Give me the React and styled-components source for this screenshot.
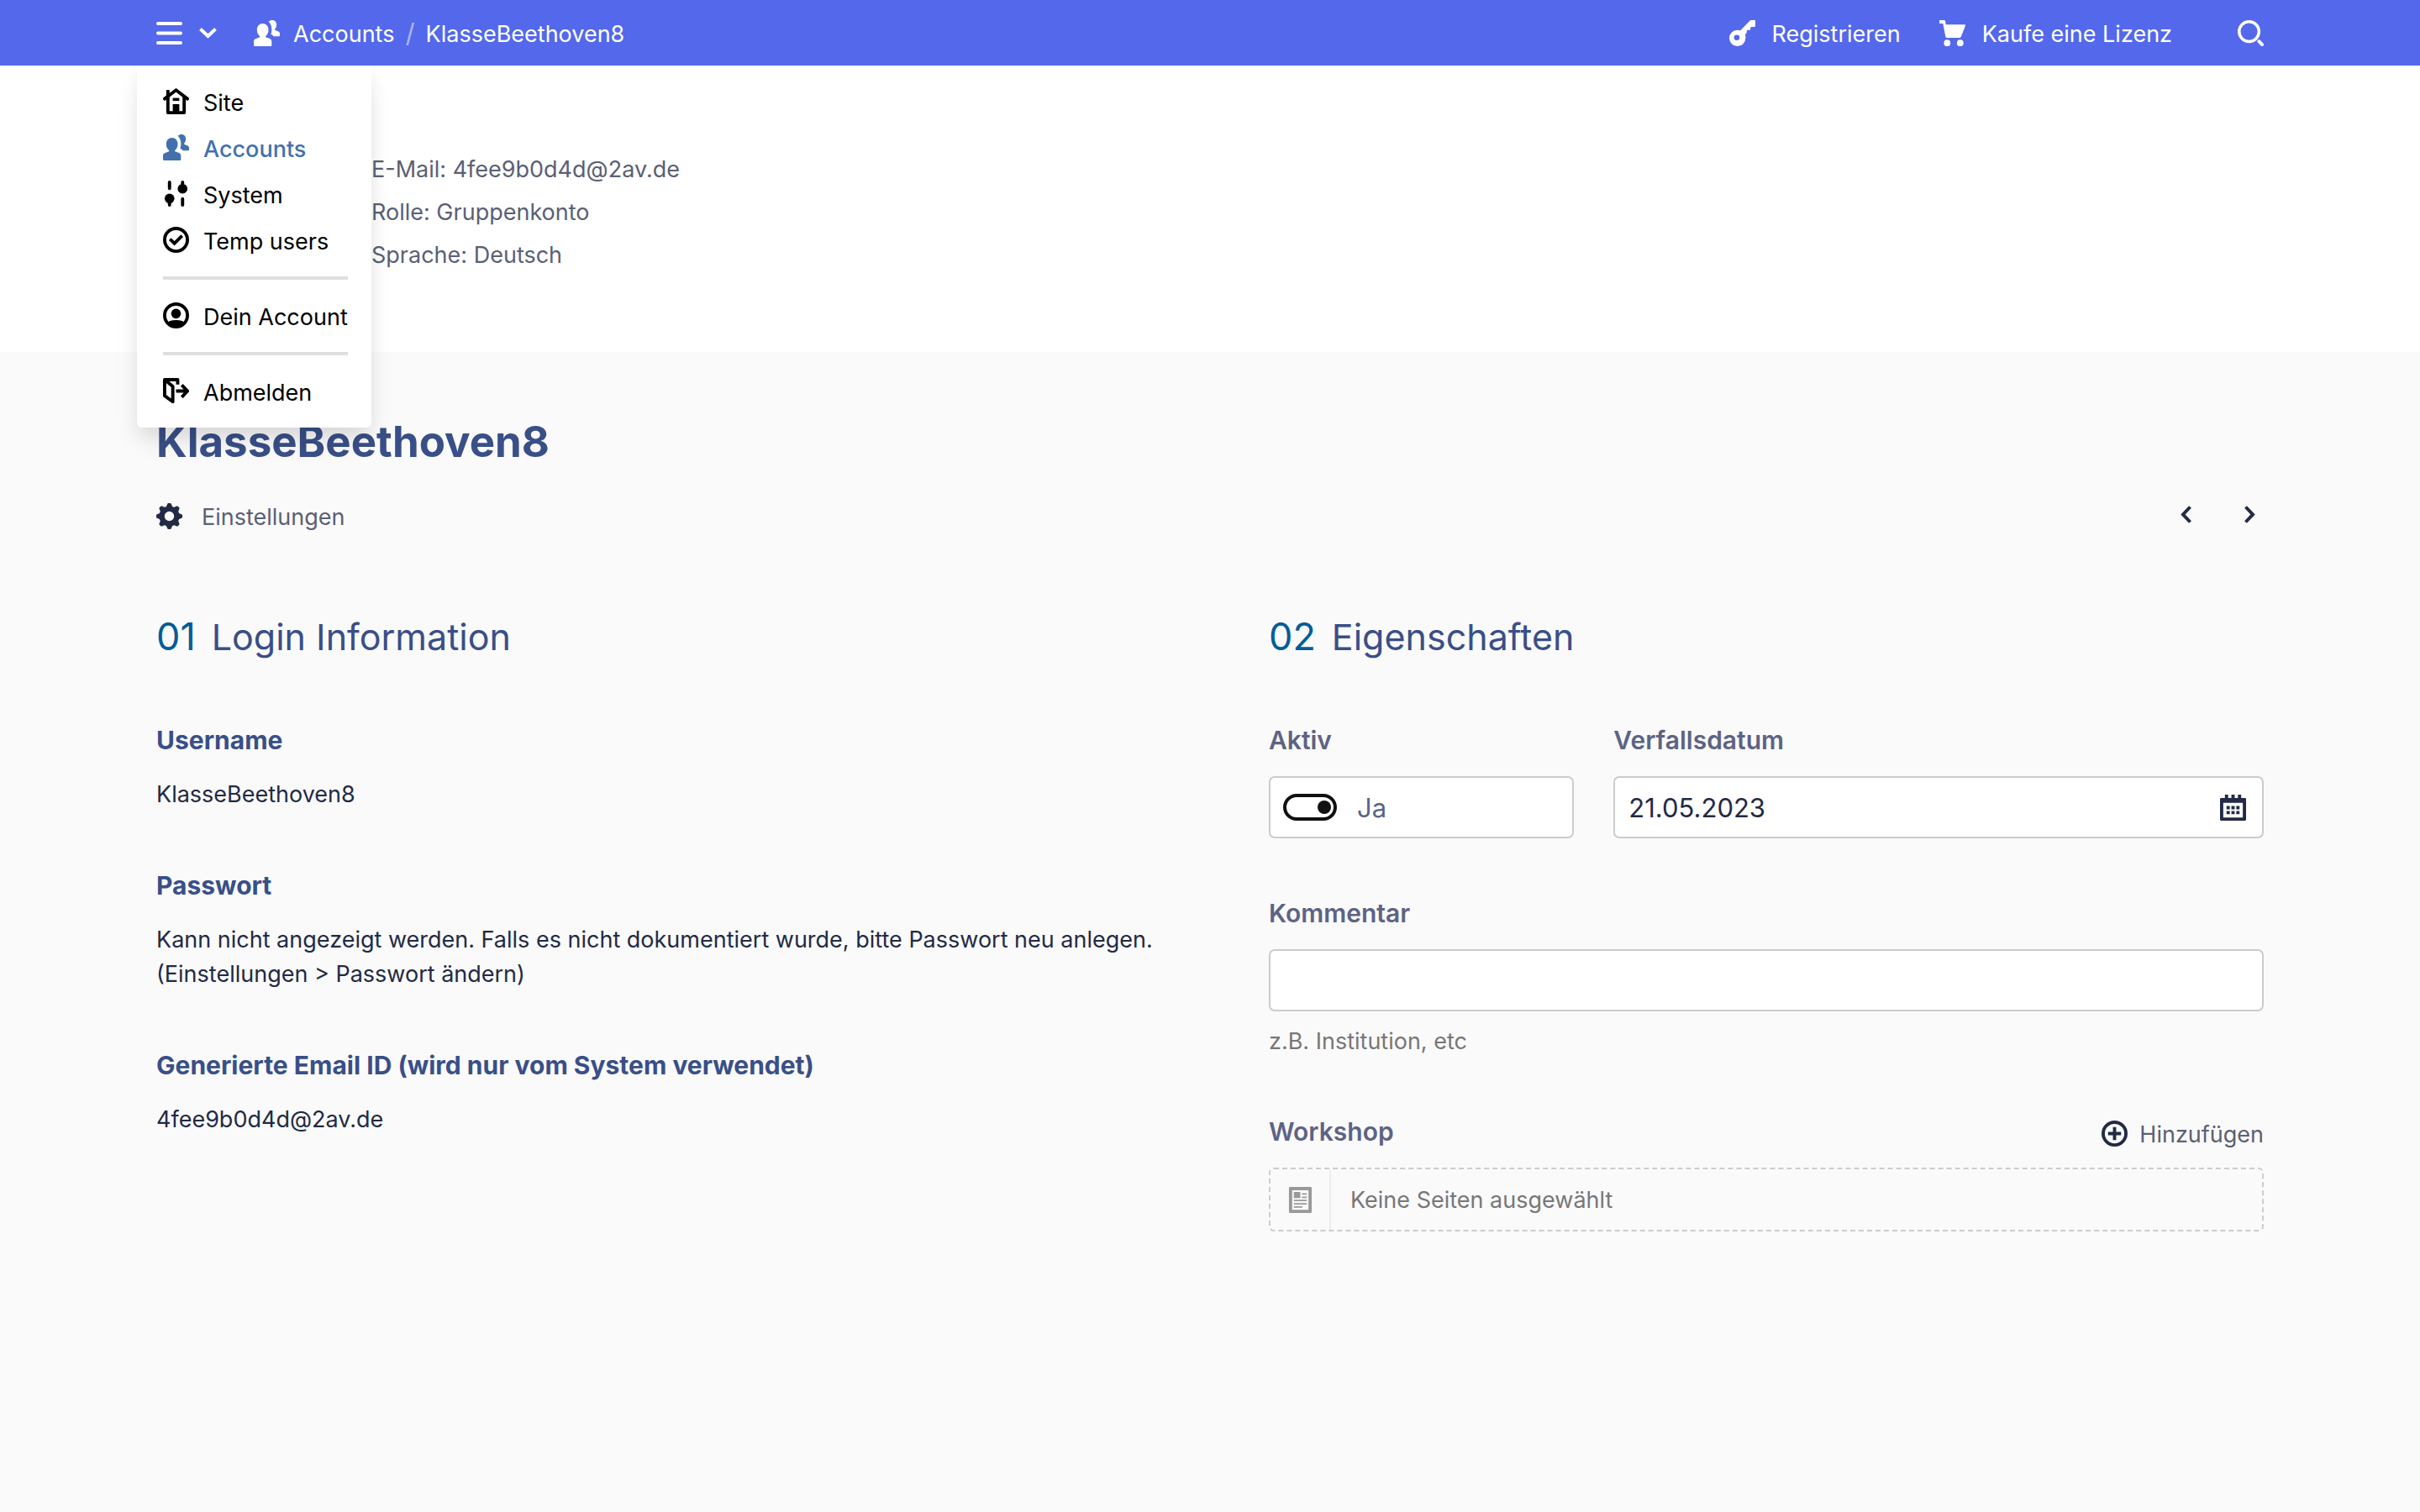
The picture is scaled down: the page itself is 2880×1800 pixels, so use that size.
import React from "react";
import styled, { createGlobalStyle } from "styled-components";

const color = {
  bar: "#5468eb",
  page: "#fafafa",
  heading: "#394f88",
  number: "#005d99",
  label: "#5d6385",
  muted: "#5a6075",
  ink: "#222a45",
  help: "#777777",
  border: "#cccccc",
  active: "#4271ae",
};

const GlobalStyle = createGlobalStyle`
  *, *::before, *::after { box-sizing: border-box; }
  body {
    margin: 0;
    background: ${color.page};
    color: ${color.ink};
    font-family: Inter, "Liberation Sans", sans-serif;
    font-size: 27px;
    line-height: 41px;
  }
  h1, h2, h3, p { margin: 0; padding: 0; }
  a { color: inherit; text-decoration: none; }
  button { border: 0; padding: 0; background: none; color: inherit; font: inherit; cursor: pointer; }
  input { font: inherit; margin: 0; }
`;

/* ---------- icons ---------- */

const Svg = styled.svg`
  display: block;
  flex: none;
  width: ${(p) => p.$w || 31}px;
  height: ${(p) => p.$h || 31}px;
  color: ${(p) => p.$color || "inherit"};
`;

function Glyph({ children, tint }) {
  return (
    <Svg viewBox="0 0 16 16" fill="currentColor" $color={tint} aria-hidden="true">
      {children}
    </Svg>
  );
}

const line = { fill: "none", stroke: "currentColor", strokeWidth: 2 };

const UsersIcon = (p) => (
  <Glyph {...p}>
    <path d="M5.5 2C7.5 2 9 3.600 9 5.500V6.300C9 7.700 8.300 9 7.300 9.800V10.400L9.900 11.400C10.600 11.800 11 12.400 11 13.200V15.500A.5.5 0 0 1 10.500 16H.5A.5.5 0 0 1 0 15.500V13.200C0 12.400 .4 11.800 1.100 11.500L3.700 10.400V9.800C2.700 9 2 7.700 2 6.300V5.500C2 3.600 3.500 2 5.500 2Z" />
    <path d="M11.500 0C13 0 14 1.200 14 2.700C14 4 13.700 4.700 13 5.400V6L15.200 7C15.800 7.300 16 7.800 16 8.400V9.500A.4.4 0 0 1 15.600 9.900H12.200C11.800 9.400 11.300 9 10.500 8.700C10.800 8 11 7 11 6V5.500C11 3.600 10.300 2 9.100 .9C9.700 .3 10.500 0 11.500 0Z" />
  </Glyph>
);
const HomeIcon = () => (
  <Glyph>
    <path {...line} strokeLinecap="round" d="M1 6.500 8 1.200 15 6.500" />
    <path {...line} strokeLinejoin="round" d="M3 5V15H13V5" />
    <rect x="2" y="1" width="2" height="4.500" rx=".4" />
    <rect x="6" y="9.800" width="4" height="6" />
    <rect x="6" y="6" width="4" height="1.800" />
  </Glyph>
);
const SlidersIcon = () => (
  <Glyph>
    <path {...line} strokeLinecap="round" d="M4 1V4.800M4 12V15M12 1V4M12 11.200V15" />
    <circle cx="4" cy="11" r="3" />
    <circle cx="12" cy="5" r="3" />
  </Glyph>
);
const CheckIcon = () => (
  <Glyph>
    <circle {...line} cx="8" cy="8" r="7" />
    <path {...line} d="M4.300 7.600 7 10.200 11.700 5.500" />
  </Glyph>
);
const AccountIcon = () => (
  <Glyph>
    <circle {...line} cx="8" cy="8" r="7" />
    <circle cx="8" cy="6.900" r="3" />
    <path d="M2.200 12.800C3.500 11.300 5.700 10.900 8 10.900S12.500 11.300 13.800 12.800C11 16.200 5 16.200 2.200 12.800Z" />
  </Glyph>
);
const LogoutIcon = () => (
  <Glyph>
    <path {...line} strokeLinejoin="round" d="M1 1H9V4" />
    <path {...line} strokeLinejoin="round" d="M1 1 6 5.200V14.600L1 10.900Z" />
    <path {...line} d="M8 8H14.500M11.500 4.300 15 8 11.500 11.800" />
  </Glyph>
);
const GearIcon = (p) => (
  <Glyph {...p}>
    <circle fill="none" stroke="currentColor" strokeWidth="3.300" cx="8" cy="8" r="4.600" />
    {[0, 45, 90, 135, 180, 225, 270, 315].map((angle) => (
      <path key={angle} transform={`rotate(${angle} 8 8)`} d="M6 2.500 6.800 .5Q7 0 7.400 0H8.600Q9 0 9.200 .5L10 2.500Z" />
    ))}
  </Glyph>
);
const KeyIcon = () => (
  <Glyph>
    <path
      fillRule="evenodd"
      d="M13 0H15.700Q16 0 16 .3V3.700L15.600 4.100H13.600L13 4.600V5.700L12.700 6H11.200L10.700 6.600V7.800L9.700 8.900C10.200 9.900 10 11 10 11A5 5 0 1 1 5 6C5.700 6 6.300 6.100 6.800 6.300ZM4.600 9A1.700 1.700 0 1 0 4.600 12.400A1.700 1.700 0 1 0 4.600 9Z"
    />
  </Glyph>
);
const CartIcon = () => (
  <Glyph>
    <path d="M0 .3Q0 0 .3 0H3Q3.500 0 3.600 .5L4 2.700H15.500Q16.100 2.700 16 3.300L13.300 10.200Q13 10.800 12.500 10.800H4.500Q3.900 10.800 3.800 10.200L2.200 2H.3Q0 2 0 1.700Z" />
    <circle cx="4.800" cy="14" r="2" />
    <circle cx="12.800" cy="14" r="2" />
  </Glyph>
);
const SearchIcon = () => (
  <Glyph>
    <circle {...line} strokeWidth="1.800" cx="7" cy="7" r="6.100" />
    <path {...line} strokeLinecap="round" d="M13.100 13 15 15" />
  </Glyph>
);
const CalendarIcon = (p) => (
  <Glyph {...p}>
    <path fillRule="evenodd" d="M3 0H5V2H7V0H9V2H11V0H13V2H15.500L16 2.500V15.500L15.500 16H.5L0 15.500V2.500L.5 2H3ZM2 5V14H14V5Z" />
    <path d="M4 7H6V9H4ZM7 7H9V9H7ZM10 7H12V9H10ZM4 10H6V12H4ZM7 10H9V12H7ZM10 10H12V12H10Z" />
  </Glyph>
);
const AddIcon = (p) => (
  <Glyph {...p}>
    <circle {...line} cx="8" cy="8" r="7" />
    <path {...line} d="M4 8H12M8 4V12" />
  </Glyph>
);
const PageIcon = (p) => (
  <Glyph {...p}>
    <path fillRule="evenodd" d="M1.500 0H14.500L15 .5V15.500L14.500 16H1.500L1 15.500V.5ZM3 2V14H13V2Z" />
    <path d="M4 3.100H8V6.800H4ZM9 3.900H12V4.800H9ZM9 5.900H12V6.800H9ZM4 7.900H12V8.800H4ZM4 9.900H12V10.800H4ZM4 11.900H9.200V12.800H4Z" />
  </Glyph>
);
const MenuIcon = () => (
  <Svg $w={31} $h={27} viewBox="0 0 31 27" aria-hidden="true">
    <path {...line} strokeWidth="4" strokeLinecap="round" d="M2 2H29M2 13.500H29M2 25H29" />
  </Svg>
);
const ChevronDown = () => (
  <Svg $w={21} $h={13} viewBox="0 0 21 13" aria-hidden="true">
    <path {...line} strokeWidth="4" d="M1.500 1.500 10.500 10 19.500 1.500" />
  </Svg>
);
const ChevronSide = ({ next }) => (
  <Svg $w={13} $h={21} viewBox="0 0 13 21" aria-hidden="true">
    <path {...line} strokeWidth="4" d={next ? "M1.500 1.500 10 10.500 1.500 19.500" : "M11.500 1.500 3 10.500 11.500 19.500"} />
  </Svg>
);

/* Text beside an icon: sits slightly below the icon's centre line. */
const Caption = styled.span`
  padding-top: 4px;
  line-height: 32px;
`;

/* ---------- top bar ---------- */

const TopBar = styled.header`
  display: flex;
  align-items: center;
  justify-content: space-between;
  height: 78px;
  padding: 0 186px;
  background: ${color.bar};
  color: #fff;
`;
const BarGroup = styled.nav`
  display: flex;
  align-items: center;
  gap: ${(p) => p.$gap}px;
`;
const MenuAnchor = styled.div`
  position: relative;
  display: flex;
  align-items: center;
  height: 78px;
`;
const MenuToggle = styled.button`
  display: flex;
  align-items: center;
  gap: 20px;
`;
const Crumbs = styled.div`
  display: flex;
  align-items: center;
  gap: 13px;
`;
const Slash = styled.span`
  font-size: 31px;
  opacity: 0.5;
`;
const IconLink = styled.a`
  display: flex;
  align-items: center;
  gap: ${(p) => p.$gap || 0}px;
`;
const SearchButton = styled.button`
  margin-left: 32px;
`;

const Dropdown = styled.div`
  position: absolute;
  z-index: 2;
  top: 100%;
  left: -23px;
  padding: 15px 28px 16px 31px;
  border-radius: 0 0 6px 6px;
  background: #fff;
  color: #000;
  box-shadow: 0 20px 30px -6px rgba(0, 0, 0, 0.1), 0 8px 20px rgba(0, 0, 0, 0.06);
  clip-path: inset(0 -60px -60px -60px);
  white-space: nowrap;
`;
const MenuItem = styled.a`
  display: flex;
  align-items: center;
  gap: 17px;
  height: 55px;
  color: ${(p) => (p.$active ? color.active : "#000")};
  font-weight: ${(p) => (p.$active ? 500 : 400)};
`;
const Divider = styled.hr`
  height: 4px;
  margin: 16px 0 15px;
  border: 0;
  background: #dfdfdf;
`;

/* ---------- profile ---------- */

const Profile = styled.section`
  padding: 98px 186px 90px 442px;
  background: #fff;
  color: ${color.muted};
  line-height: 51px;
`;

const Main = styled.main`
  padding: 73px 186px 120px;
`;
const Title = styled.h1`
  color: ${color.heading};
  font-size: 51px;
  line-height: 68px;
  font-weight: 700;
`;
const Toolbar = styled.div`
  display: flex;
  align-items: center;
  justify-content: space-between;
  margin-top: 34px;
  height: 40px;
`;
const ToolButton = styled.button`
  display: flex;
  align-items: center;
  gap: ${(p) => p.$gap}px;
  color: ${color.muted};
`;
const Pager = styled.div`
  display: flex;
  align-items: center;
  gap: 63px;
  padding: 0 10px 4px 0;
`;
const PagerLink = styled.a`
  color: ${color.ink};
`;

const Columns = styled.div`
  display: grid;
  grid-template-columns: 1fr 1fr;
  gap: 140px;
  margin-top: 96px;
`;
const Column = styled.section`
  min-width: 0;
`;
const ColumnTitle = styled.h2`
  display: flex;
  align-items: baseline;
  gap: 19px;
  margin-bottom: 75px;
  color: ${color.heading};
  font-size: 43px;
  line-height: 56px;
  font-weight: 400;
`;
const ColumnNumber = styled.span`
  color: ${color.number};
  font-size: 45px;
`;
const Stack = styled.div`
  display: flex;
  flex-direction: column;
  gap: ${(p) => p.$gap}px;
`;
const InfoTitle = styled.h3`
  margin-bottom: 24px;
  color: ${color.heading};
  font-size: 30px;
  line-height: 40px;
  font-weight: 700;
`;
const InfoText = styled.p`
  white-space: nowrap;
`;

/* ---------- form ---------- */

const FieldRow = styled.div`
  display: grid;
  grid-template-columns: repeat(3, 1fr);
  gap: 47px;
`;
const Field = styled.div`
  grid-column: span ${(p) => p.$span || 1};
  min-width: 0;
`;
const FieldHeader = styled.div`
  display: flex;
  align-items: flex-end;
  justify-content: space-between;
  height: 40px;
  margin-bottom: 23px;
`;
const Label = styled.label`
  color: ${color.label};
  font-size: 30px;
  line-height: 40px;
  font-weight: 600;
`;
const Box = styled.div`
  display: flex;
  align-items: center;
  height: 74px;
  padding: 0 ${(p) => p.$pad || 0}px;
  border: 2px solid ${color.border};
  border-radius: 7px;
  background: #fff;
  font-size: 31px;
`;
const TextInput = styled.input`
  flex: 1;
  min-width: 0;
  height: 100%;
  padding: 0 16px;
  border: 0;
  outline: 0;
  background: transparent;
  color: ${color.ink};
`;
const DateButton = styled.button`
  margin-right: 19px;
`;
const Toggle = styled.input`
  appearance: none;
  display: flex;
  align-items: center;
  justify-content: flex-end;
  width: 64px;
  height: 32px;
  padding: 0 3px;
  border: 4px solid #111;
  border-radius: 16px;

  &::before {
    content: "";
    width: 16px;
    height: 16px;
    border-radius: 50%;
    background: #111;
  }
`;
const ToggleText = styled.span`
  margin-left: 24px;
  color: ${color.label};
`;
const Help = styled.p`
  margin-top: 18px;
  color: ${color.help};
  line-height: 36px;
`;
const EmptyBox = styled.div`
  display: flex;
  align-items: stretch;
  height: 76px;
  border: 2px dashed ${color.border};
  border-radius: 6px;
  color: ${color.help};
`;
const EmptyIcon = styled.span`
  display: flex;
  align-items: center;
  justify-content: center;
  width: 72px;
  border-right: 2px solid #ededed;
`;
const EmptyText = styled.p`
  align-self: center;
  padding: 0 23px;
`;

const menuGroups = [
  [
    { label: "Site", Icon: HomeIcon },
    { label: "Accounts", Icon: UsersIcon, active: true },
    { label: "System", Icon: SlidersIcon },
    { label: "Temp users", Icon: CheckIcon },
  ],
  [{ label: "Dein Account", Icon: AccountIcon }],
  [{ label: "Abmelden", Icon: LogoutIcon }],
];

const loginInfo = [
  { title: "Username", lines: ["KlasseBeethoven8"] },
  {
    title: "Passwort",
    lines: [
      "Kann nicht angezeigt werden. Falls es nicht dokumentiert wurde, bitte Passwort neu anlegen.",
      "(Einstellungen > Passwort ändern)",
    ],
  },
  { title: "Generierte Email ID (wird nur vom System verwendet)", lines: ["4fee9b0d4d@2av.de"] },
];

export default function App() {
  return (
    <>
      <GlobalStyle />
      <TopBar>
        <BarGroup $gap={44}>
          <MenuAnchor>
            <MenuToggle type="button" aria-label="Menü" aria-expanded="true">
              <MenuIcon />
              <ChevronDown />
            </MenuToggle>
            <Dropdown>
              {menuGroups.map((group, i) => (
                <React.Fragment key={i}>
                  {i > 0 && <Divider />}
                  {group.map(({ label, Icon, active }) => (
                    <MenuItem key={label} href="#" $active={active}>
                      <Icon />
                      <Caption>{label}</Caption>
                    </MenuItem>
                  ))}
                </React.Fragment>
              ))}
            </Dropdown>
          </MenuAnchor>
          <Crumbs>
            <IconLink href="#" $gap={16}>
              <UsersIcon />
              <Caption>Accounts</Caption>
            </IconLink>
            <Slash>/</Slash>
            <IconLink href="#">
              <Caption>KlasseBeethoven8</Caption>
            </IconLink>
          </Crumbs>
        </BarGroup>
        <BarGroup $gap={46}>
          <IconLink href="#" $gap={20}>
            <KeyIcon />
            <Caption>Registrieren</Caption>
          </IconLink>
          <IconLink href="#" $gap={20}>
            <CartIcon />
            <Caption>Kaufe eine Lizenz</Caption>
          </IconLink>
          <SearchButton type="button" aria-label="Suchen">
            <SearchIcon />
          </SearchButton>
        </BarGroup>
      </TopBar>

      <Profile>
        <p>E-Mail: 4fee9b0d4d@2av.de</p>
        <p>Rolle: Gruppenkonto</p>
        <p>Sprache: Deutsch</p>
      </Profile>

      <Main>
        <Title>KlasseBeethoven8</Title>
        <Toolbar>
          <ToolButton type="button" $gap={23}>
            <GearIcon tint={color.ink} />
            <Caption>Einstellungen</Caption>
          </ToolButton>
          <Pager>
            <PagerLink href="#" aria-label="Zurück">
              <ChevronSide />
            </PagerLink>
            <PagerLink href="#" aria-label="Weiter">
              <ChevronSide next />
            </PagerLink>
          </Pager>
        </Toolbar>

        <Columns>
          <Column>
            <ColumnTitle>
              <ColumnNumber>01</ColumnNumber>
              Login Information
            </ColumnTitle>
            <Stack $gap={68}>
              {loginInfo.map(({ title, lines }) => (
                <div key={title}>
                  <InfoTitle>{title}</InfoTitle>
                  {lines.map((text) => (
                    <InfoText key={text}>{text}</InfoText>
                  ))}
                </div>
              ))}
            </Stack>
          </Column>

          <Column>
            <ColumnTitle>
              <ColumnNumber>02</ColumnNumber>
              Eigenschaften
            </ColumnTitle>
            <Stack $gap={69}>
              <FieldRow>
                <Field>
                  <FieldHeader>
                    <Label htmlFor="active">Aktiv</Label>
                  </FieldHeader>
                  <Box $pad={15}>
                    <Toggle id="active" type="checkbox" defaultChecked />
                    <ToggleText>Ja</ToggleText>
                  </Box>
                </Field>
                <Field $span={2}>
                  <FieldHeader>
                    <Label htmlFor="expiry">Verfallsdatum</Label>
                  </FieldHeader>
                  <Box>
                    <TextInput id="expiry" type="text" defaultValue="21.05.2023" />
                    <DateButton type="button" aria-label="Datum wählen">
                      <CalendarIcon tint={color.ink} />
                    </DateButton>
                  </Box>
                </Field>
              </FieldRow>

              <Field>
                <FieldHeader>
                  <Label htmlFor="comment">Kommentar</Label>
                </FieldHeader>
                <Box>
                  <TextInput id="comment" type="text" />
                </Box>
                <Help>z.B. Institution, etc</Help>
              </Field>

              <Field>
                <FieldHeader>
                  <Label as="h3">Workshop</Label>
                  <ToolButton type="button" $gap={14}>
                    <AddIcon tint={color.ink} />
                    <Caption>Hinzufügen</Caption>
                  </ToolButton>
                </FieldHeader>
                <EmptyBox>
                  <EmptyIcon>
                    <PageIcon tint="#999999" />
                  </EmptyIcon>
                  <EmptyText>Keine Seiten ausgewählt</EmptyText>
                </EmptyBox>
              </Field>
            </Stack>
          </Column>
        </Columns>
      </Main>
    </>
  );
}
